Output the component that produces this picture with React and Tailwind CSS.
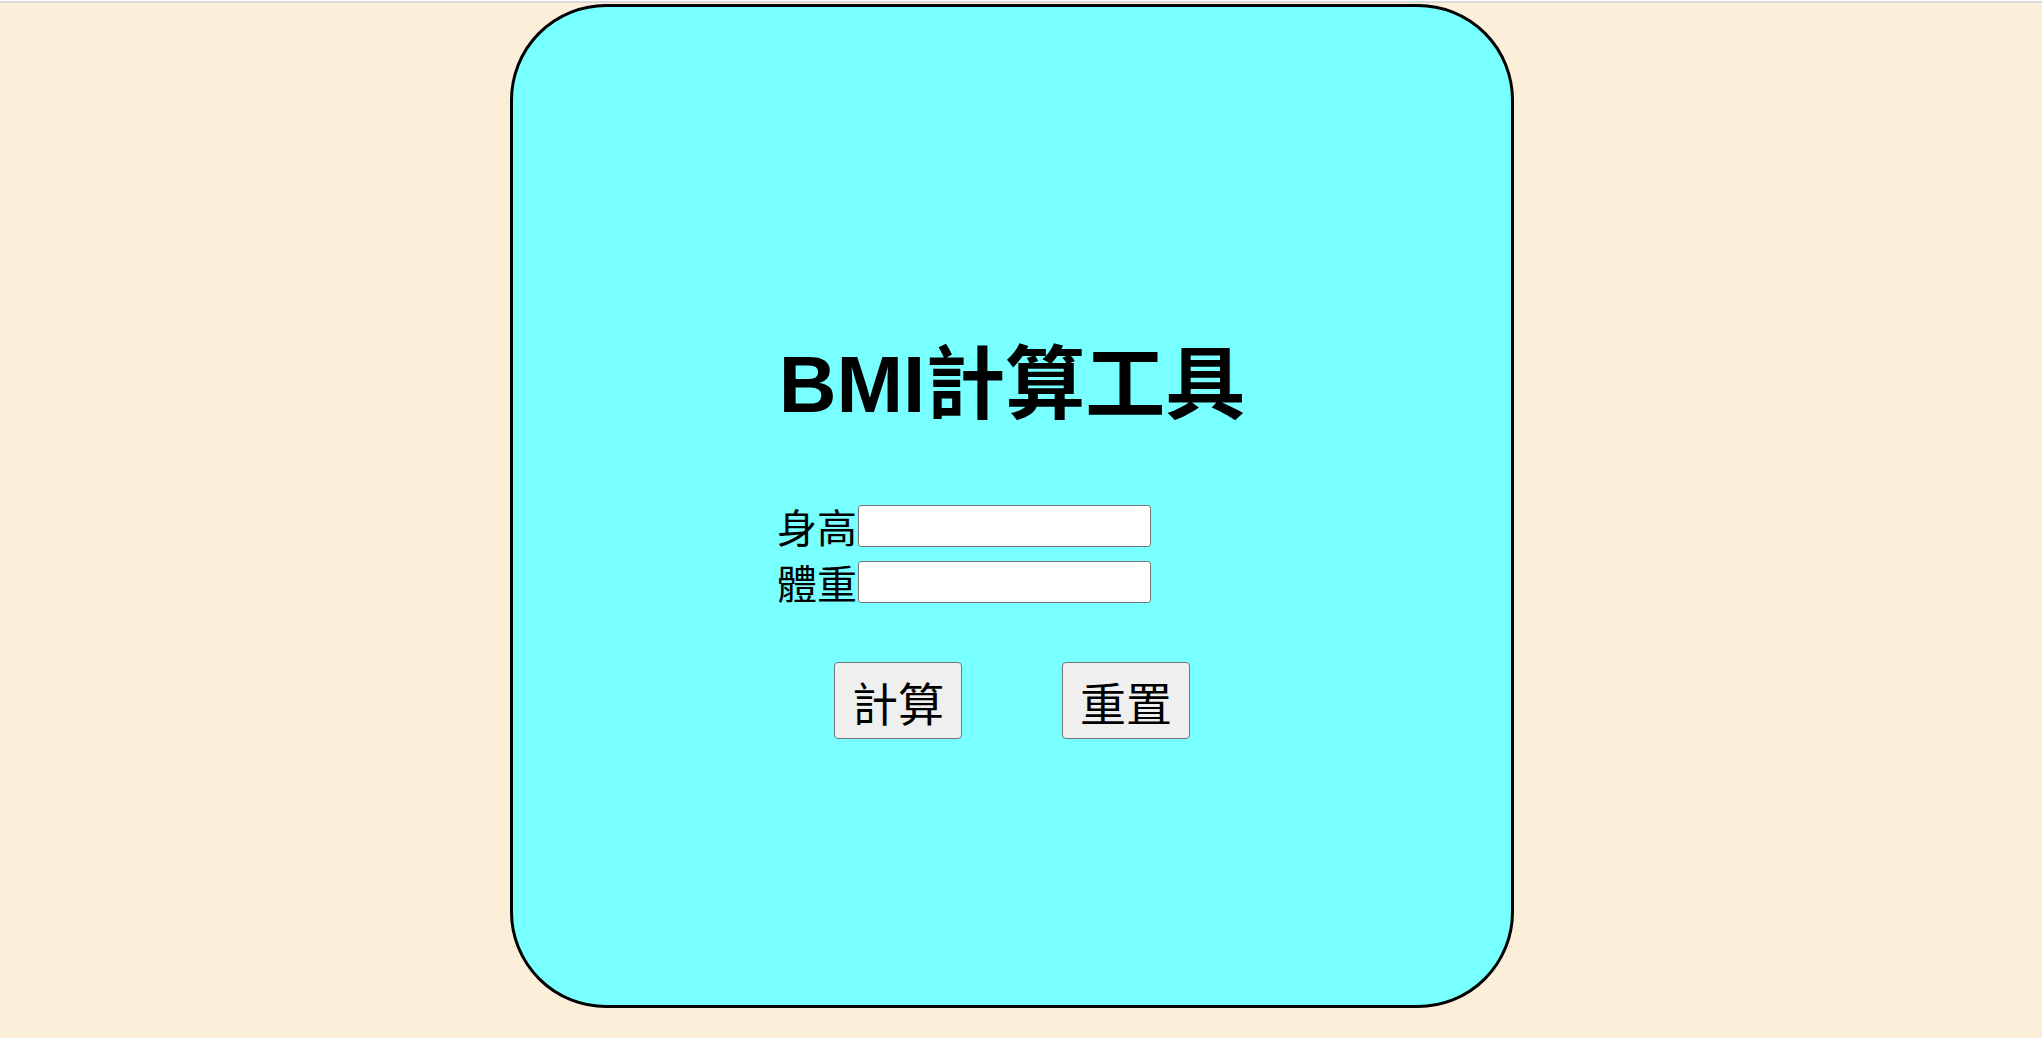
import React from 'react'

const font = { fontFamily: '"Noto Sans CJK TC", "Noto Sans", sans-serif' }
const titleFont = { fontFamily: '"Liberation Sans", "Noto Sans CJK TC", sans-serif' }

function Field({ label }) {
  return (
    <div className="flex items-center h-[42px]">
      <label className="text-[40px] leading-none text-black w-[81px]">{label}</label>
      <input type="text" className="w-[293px] h-[42px] bg-white border border-[#767676] rounded-[3px] outline-none px-1" />
    </div>
  )
}

export default function App() {
  return (
    <div className="min-h-[1038px] bg-[#fcefda]" style={font}>
      <div className="h-[1px] bg-white" />
      <div className="h-[2px] bg-[#dadada]" />
      <div className="pt-[1px] pl-[510px]">
        <div className="w-[1004px] h-[1004px] bg-[#78ffff] border-[3px] border-black rounded-[96px] flex flex-col">
          <h1 className="pt-[338px] text-center text-[80px] leading-[80px] font-bold text-black" style={titleFont}>BMI計算工具</h1>
          <div className="mt-[80px] ml-[264px] flex flex-col gap-[14px]">
            <Field label="身高" />
            <Field label="體重" />
          </div>
          <div className="mt-[59px] flex justify-center gap-[100px]">
            <button className="w-[128px] h-[77px] bg-[#efefef] border border-[#767676] rounded-[4px] text-[46px] leading-none text-black">計算</button>
            <button className="w-[128px] h-[77px] bg-[#efefef] border border-[#767676] rounded-[4px] text-[46px] leading-none text-black">重置</button>
          </div>
        </div>
      </div>
    </div>
  )
}
